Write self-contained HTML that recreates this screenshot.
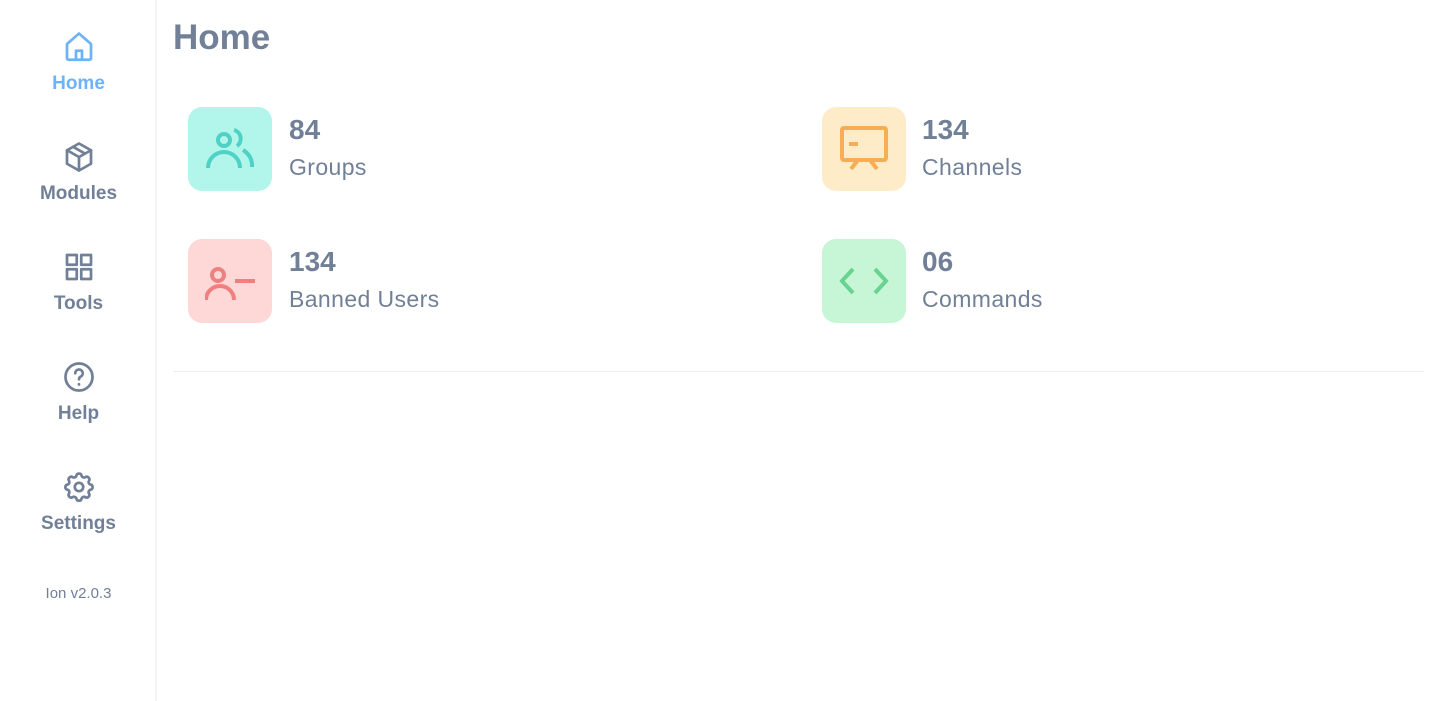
<!DOCTYPE html>
<html><head><style>
*{margin:0;padding:0;box-sizing:border-box}
body{width:1440px;height:701px;background:#fff;font-family:"Liberation Sans",sans-serif;color:#718096;position:relative;overflow:hidden}
.side{position:absolute;left:0;top:0;width:157px;height:701px;border-right:2px solid #f4f5f7}
.nav{position:absolute;left:0;width:157px;text-align:center}
.nav svg{display:block;margin:0 auto;width:30px;height:30px;fill:none;stroke:#718096;stroke-width:1.8;stroke-linecap:round;stroke-linejoin:round}
.nav span{display:block;font-size:19px;font-weight:bold;margin-top:11px}
.nav.act svg{stroke:#6cb3f7}.nav.act span{color:#6cb3f7}
.ver{position:absolute;left:0;width:157px;text-align:center;top:585px;font-size:15px}
h1{position:absolute;left:173px;top:18px;font-size:35px;font-weight:bold}
.card{position:absolute;width:84px;height:84px;border-radius:14px}
.card svg{position:absolute;left:17px;top:17px;width:50px;height:50px;fill:none;stroke-width:4;stroke-linecap:butt}
.num{position:absolute;font-size:28px;font-weight:bold}
.lab{position:absolute;font-size:23px;letter-spacing:0.4px}
.hr{position:absolute;left:173px;top:371px;width:1251px;height:1px;background:#edf0f3}
</style></head><body>
<div class="side">
<div class="nav act" style="top:32px"><svg viewBox="2 2 20 20"><path d="M4 10l8-7 8 7v9.5a1 1 0 0 1-1 1H5a1 1 0 0 1-1-1z"/><path d="M10 20.5v-6h4v6"/></svg><span>Home</span></div>
<div class="nav" style="top:142px"><svg viewBox="2 2 20 20"><path d="M12 3l8 4.5v9L12 21l-8-4.5v-9z"/><path d="M4 7.5l8 4.5 8-4.5M12 12v9M8 5.2l8 4.5"/></svg><span>Modules</span></div>
<div class="nav" style="top:252px"><svg viewBox="2 2 20 20"><rect x="4" y="4" width="6.5" height="6.5"/><rect x="13.5" y="4" width="6.5" height="6.5"/><rect x="4" y="13.5" width="6.5" height="6.5"/><rect x="13.5" y="13.5" width="6.5" height="6.5"/></svg><span>Tools</span></div>
<div class="nav" style="top:362px"><svg viewBox="2 2 20 20"><circle cx="12" cy="12" r="9"/><path d="M9.5 9.5a2.5 2.5 0 1 1 3.5 2.3c-.7.4-1 .9-1 1.7"/><path d="M12 16.8v.2"/></svg><span>Help</span></div>
<div class="nav" style="top:472px"><svg viewBox="2 2 20 20"><circle cx="12" cy="12" r="2.8"/><path d="M10.3 4.3c.4-1.7 3-1.7 3.4 0a1.7 1.7 0 0 0 2.6 1.1c1.5-.9 3.3.9 2.4 2.4a1.7 1.7 0 0 0 1.1 2.6c1.7.4 1.7 3 0 3.4a1.7 1.7 0 0 0-1.1 2.6c.9 1.5-.9 3.3-2.4 2.4a1.7 1.7 0 0 0-2.6 1.1c-.4 1.7-3 1.7-3.4 0a1.7 1.7 0 0 0-2.6-1.1c-1.5.9-3.3-.9-2.4-2.4a1.7 1.7 0 0 0-1.1-2.6c-1.7-.4-1.7-3 0-3.4a1.7 1.7 0 0 0 1.1-2.6c-.9-1.5.9-3.3 2.4-2.4a1.7 1.7 0 0 0 2.6-1.1z"/></svg><span>Settings</span></div>
<div class="ver">Ion v2.0.3</div>
</div>
<h1>Home</h1>
<div class="card" style="left:188px;top:107px;background:#b2f5ea"><svg viewBox="0 0 50 50" stroke="#4fd1c5"><circle cx="19" cy="16" r="6"/><path d="M3 44a16 16 0 0 1 32 0"/><path d="M29 6a9 9 0 0 1 3 16M38 26a18 18 0 0 1 9 17"/></svg></div>
<div class="num" style="left:289px;top:114px">84</div><div class="lab" style="left:289px;top:154px">Groups</div>
<div class="card" style="left:822px;top:107px;background:#feebc8"><svg viewBox="0 0 50 50" stroke="#f6ad55"><rect x="3" y="4" width="44" height="32" rx="2"/><path d="M10 20h9M19 36l-7 9M31 36l7 9"/></svg></div>
<div class="num" style="left:922px;top:114px">134</div><div class="lab" style="left:922px;top:154px">Channels</div>
<div class="card" style="left:188px;top:239px;background:#fed7d7"><svg viewBox="0 0 50 50" stroke="#f08080"><circle cx="13" cy="19" r="6"/><path d="M1 44a14 14 0 0 1 28 0M30 25h20"/></svg></div>
<div class="num" style="left:289px;top:246px">134</div><div class="lab" style="left:289px;top:286px">Banned Users</div>
<div class="card" style="left:822px;top:239px;background:#c6f6d5"><svg viewBox="0 0 50 50" stroke="#68d391" stroke-linejoin="miter"><path d="M14 13l-11 12 11 12M36 13l11 12-11 12"/></svg></div>
<div class="num" style="left:922px;top:246px">06</div><div class="lab" style="left:922px;top:286px">Commands</div>
<div class="hr"></div>
</body></html>
